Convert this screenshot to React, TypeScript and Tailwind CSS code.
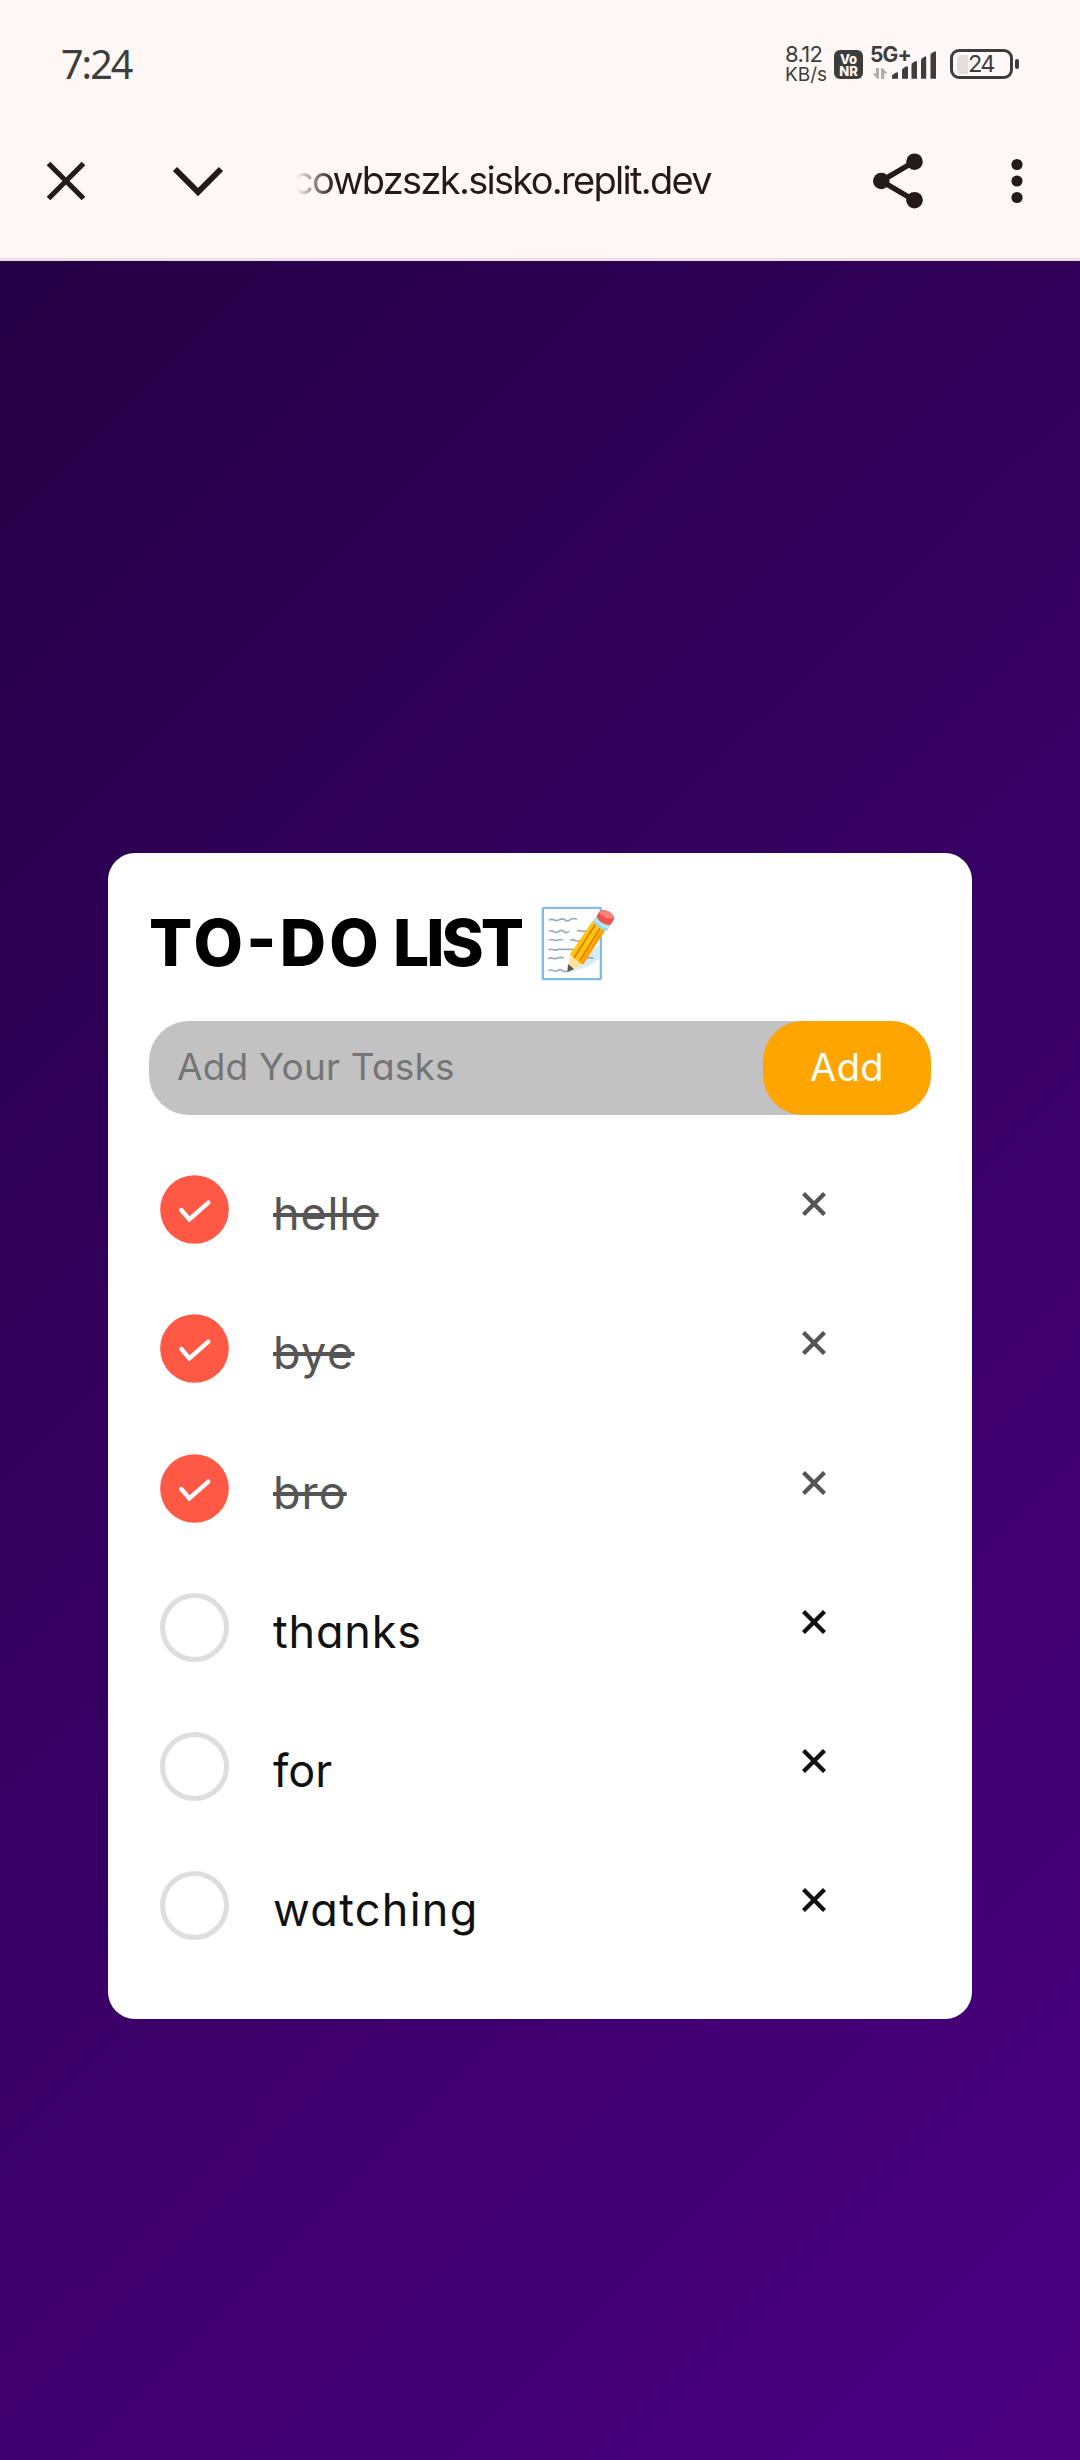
type Task = { name: string; done: boolean; tracking: string };

const tasks: Task[] = [
  { name: "hello", done: true, tracking: "tracking-[0.8px]" },
  { name: "bye", done: true, tracking: "tracking-[1.4px]" },
  { name: "bro", done: true, tracking: "tracking-[1px]" },
  { name: "thanks", done: false, tracking: "tracking-[0.8px]" },
  { name: "for", done: false, tracking: "tracking-[0px]" },
  { name: "watching", done: false, tracking: "tracking-[1.3px]" },
];

function StatusBar() {
  return (
    <div className="flex h-[129px] items-start pl-[61px] text-[#3d3d3d]">
      <div className="mt-[40px] w-[724px] font-['Noto_Sans',sans-serif] text-[39.5px] leading-[48px] tracking-[-2px]">7:24</div>
      <div className="mt-[44px] w-[49px] whitespace-nowrap text-[22px] leading-[21px]">
        <div className="tracking-[-0.7px]">8.12</div>
        <div className="text-[19px] leading-[20px] tracking-[0px]">KB/s</div>
      </div>
      <div className="mt-[50px] flex h-[29px] w-[29px] flex-col items-center justify-center rounded-[6px] bg-[#3d3d3d] text-[13px] font-extrabold leading-[12px] text-[#fff8f6]">
        <span>Vo</span>
        <span>NR</span>
      </div>
      <div className="relative ml-[7px] mt-[46px] h-[34px] w-[67px]">
        <span className="absolute left-0 top-0 whitespace-nowrap text-[21px] font-bold leading-[17px] tracking-[-0.8px]">5G+</span>
        <svg className="h-[34px] w-[67px]" viewBox="0 0 67 34" fill="#3d3d3d">
          <g fill="#b3aead">
            <path d="M11 22h1.600l5 5.500h-3.200V33H11z" />
            <path d="M9 22v11H7.600L2.500 27.500h3.400V22z" />
          </g>
          <path d="M22 32.800V30q0-.8 1-1.400l3.200-2q1.800-1 1.800 1v5.200h-6z" />
          <path d="M32 32.800V24.500q0-1.500 1.200-2.200l2.800-1.700q2-1 2 1v11.200z" />
          <path d="M41.500 32.800V19q0-1.500 1-2l3-1.800q1.500-.8 1.500 1v16.600z" />
          <path d="M51 32.800V14.500q0-1.500 1-2.200l3-1.800q1.200-.6 1.200 1v21.300z" />
          <path d="M60.500 32.800V9.500q0-1.500 1-2.200l3-1.800q1.500-.7 1.500 1v26.300z" />
        </svg>
      </div>
      <div className="ml-[13px] mt-[49px] flex h-[30px] w-[63px] items-center rounded-[9px] border-[3.5px] border-[#3d3d3d] pl-[4px]">
        <div className="h-[19px] w-[11px] rounded-l-[4px] bg-[#e3dddb]" />
        <span className="text-[23.500px] leading-[22px] tracking-[-1.8px]">24</span>
      </div>
      <div className="ml-[2px] mt-[59px] h-[10px] w-[4px] rounded-full bg-[#3d3d3d]" />
    </div>
  );
}

function BrowserBar() {
  return (
    <div className="flex h-[129px] items-start text-[#231a19]">
      <svg className="ml-[40px] mt-[26px] h-[52px] w-[52px]" viewBox="0 0 52 52" fill="none" stroke="#231a19" strokeWidth="5.200">
        <path d="M8.500 8.500l35 35M43.500 8.500l-35 35" />
      </svg>
      <svg className="ml-[72px] mt-[26px] h-[52px] w-[68px]" viewBox="0 0 68 52" fill="none" stroke="#231a19" strokeWidth="6">
        <path d="M11 14l23 23 23-23" />
      </svg>
      <div className="ml-[60px] mt-[25px] w-[425px] whitespace-nowrap text-[38px] leading-[53px] tracking-[-1.7px] [mask-image:linear-gradient(to_right,transparent_4px,black_42px)]">
        cowbzszk.sisko.replit.dev
      </div>
      <svg className="ml-[155px] mt-[21px] h-[60px] w-[56px]" viewBox="0 0 56 60" fill="#231a19">
        <path d="M42.500 11.500L9.500 31l33 19.500" fill="none" stroke="#231a19" strokeWidth="5.500" />
        <circle cx="42.500" cy="11.700" r="8.300" />
        <circle cx="9.300" cy="31" r="8.300" />
        <circle cx="42.500" cy="50.200" r="8.300" />
      </svg>
      <svg className="ml-[72px] mt-[26px] h-[52px] w-[28px]" viewBox="0 0 28 52" fill="#231a19">
        <circle cx="17" cy="9.500" r="5.600" />
        <circle cx="17" cy="26" r="5.600" />
        <circle cx="17" cy="42.500" r="5.600" />
      </svg>
    </div>
  );
}

function MemoIcon() {
  return (
    <svg className="h-[110px] w-[110px] shrink-0" viewBox="0 0 330 330" fill="none">
      <rect x="68.500" y="53.500" width="174" height="214" rx="3" fill="#fff" stroke="#7fbde6" strokeWidth="7" />
      <path d="M239 165v40q-32 30-78 36l-10-3z" fill="#d5ebf8" />
      <g stroke="#9aabb3" strokeWidth="5">
        <path d="M87 90q8-4 16 0t16-1 16 1 16-1 20 0" />
        <path d="M87 124q8-4 15 1t15-1 15 1 15-2M171 123q10-2 14 0t18 0" />
        <path d="M87 150q8-3 14 0t13 0 15 0M151 150q9-3 14 1t20 0" />
        <path d="M86 180q7-4 14-1t16-1h44" />
        <path d="M85 206q7-4 13-1t15-1 18 1M200 205q8-4 21 0" />
        <path d="M86 242q8-4 14 0t14-1 14 1 16 0" />
      </g>
      <path d="M145 225l5-33 42 28-33 20-18 5z" fill="#ffe3a3" />
      <path d="M144 223q9 4 18 15l-20 9z" fill="#595b60" />
      <path d="M150 193l68-100 38 26-64 101q-5 4-13-1z" fill="#ffc20e" />
      <path d="M181 219l66-106 9 6-64 101q-5 4-11-1z" fill="#ffa000" />
      <path d="M162 204l66-104M179 213l64-103" stroke="#d98008" strokeWidth="5" />
      <path d="M219 94l11-16q22 18 40 27l-9 18q-29-5-42-29z" fill="#9fd8e2" />
      <path d="M225 86q20 24 41 27" stroke="#c7edf1" strokeWidth="5" />
      <path d="M230 79q6-17 20-20 32 7 32 27-4 13-13 20-31-5-39-27z" fill="#ee5150" />
      <path d="M238 68q12-14 32 0 13 10 8 17-10 4-24-4-15-8-16-13z" fill="#fa8078" />
    </svg>
  );
}

function TaskRow({ task }: { task: Task }) {
  return (
    <li className="flex h-[139.25px] items-start">
      {task.done ? (
        <svg className="h-[69px] w-[69px]" viewBox="0 0 207 207" fill="none">
          <circle cx="103.500" cy="103.500" r="103" fill="#ff5945" />
          <path d="M64 105l24 28 57-50" stroke="#fff" strokeWidth="13" strokeLinecap="round" />
        </svg>
      ) : (
        <div className="h-[69px] w-[69px] rounded-full border-[5px] border-[#dedede]" />
      )}
      <span
        className={`ml-[44px] mt-[11px] text-[45px] leading-[56px] ${task.tracking} ${
          task.done ? "text-[#555] line-through decoration-[4px]" : "text-[#111]"
        }`}
      >
        {task.name}
      </span>
      <button className="ml-auto mr-[105.5px] mt-[17px]" aria-label={`Remove ${task.name}`}>
        <svg className="h-[24px] w-[24px]" viewBox="0 0 24 24" stroke={task.done ? "#555" : "#111"} strokeWidth="4.300">
          <path d="M1.500 1.500l21 21M22.500 1.500l-21 21" />
        </svg>
      </button>
    </li>
  );
}

export default function App() {
  return (
    <div className="flex h-[2460px] w-[1080px] flex-col overflow-hidden font-['Inter','Liberation_Sans',sans-serif]">
      <header className="h-[261px] border-b-[3px] border-[#f0dee2] bg-[#fff8f6]">
        <StatusBar />
        <BrowserBar />
      </header>
      <main className="flex flex-1 justify-center bg-[linear-gradient(135deg,#240046,#4b0082)] pt-[592px] [font-feature-settings:'cv11','case']">
        <section className="h-[1166px] w-[864px] rounded-[27px] bg-white pl-[41px] pr-[41px]">
          <h1 className="flex h-[168px] items-start pt-[37px] text-[64px] font-extrabold leading-[106px]">
            <span className="w-[371px] whitespace-nowrap">
              <span className="tracking-[3.3px]">TO-DO</span>
              <span className="tracking-[-3px]"> LIST</span>
            </span>
            <MemoIcon />
          </h1>
          <div className="flex h-[94px] justify-between rounded-[40px] bg-[#c2c2c2]">
            <span className="pl-[28px] text-[37px] leading-[91px] tracking-[0.2px] text-[#757575]">Add Your Tasks</span>
            <button className="w-[168px] rounded-[40px] bg-[#ffa500] pb-[2px] text-[38px] leading-[91px] tracking-[0.4px] text-white">Add</button>
          </div>
          <ul className="ml-[11px] mt-[60px]">
            {tasks.map((task) => (
              <TaskRow key={task.name} task={task} />
            ))}
          </ul>
        </section>
      </main>
    </div>
  );
}
